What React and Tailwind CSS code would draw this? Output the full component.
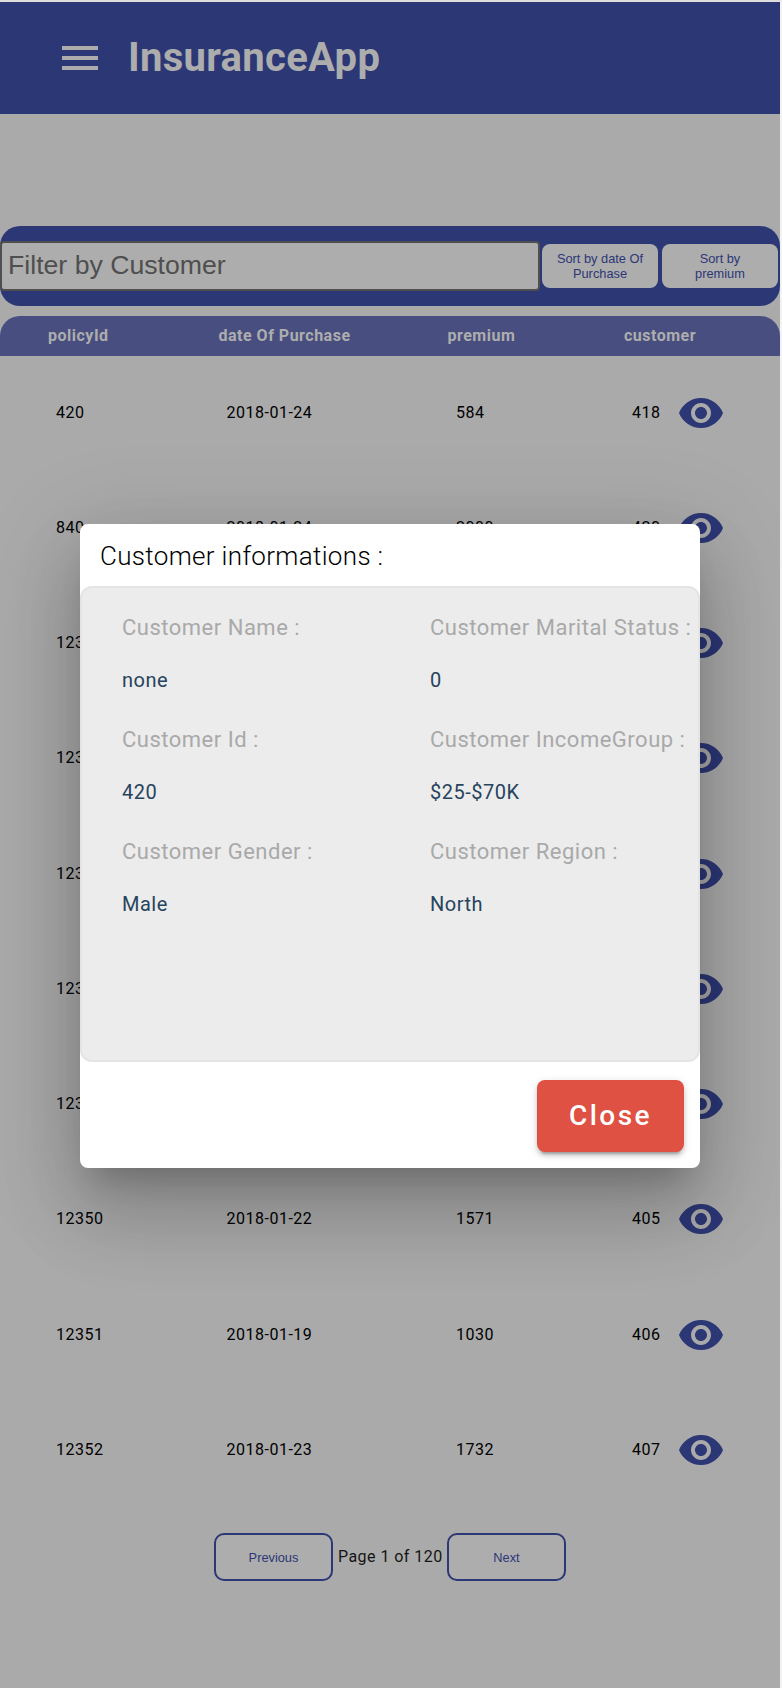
import React from "react";

const rows = [
  ["420", "2018-01-24", "584", "418"],
  ["840", "2018-01-24", "2000", "420"],
  ["12345", "2018-01-24", "1300", "400"],
  ["12346", "2018-01-24", "1420", "401"],
  ["12347", "2018-01-23", "1275", "402"],
  ["12348", "2018-01-23", "1116", "403"],
  ["12349", "2018-01-22", "1384", "404"],
  ["12350", "2018-01-22", "1571", "405"],
  ["12351", "2018-01-19", "1030", "406"],
  ["12352", "2018-01-23", "1732", "407"],
];

const details = [
  ["Customer Name :", "none"],
  ["Customer Marital Status :", "0"],
  ["Customer Id :", "420"],
  ["Customer IncomeGroup :", "$25-$70K"],
  ["Customer Gender :", "Male"],
  ["Customer Region :", "North"],
];

function MenuIcon() {
  return (
    <svg viewBox="0 0 24 24" className="size-12 fill-[#adadad]">
      <path d="M3 18h18v-2H3v2zm0-5h18v-2H3v2zm0-7v2h18V6H3z" />
    </svg>
  );
}

function EyeIcon() {
  return (
    <svg viewBox="0 0 24 24" className="size-12 shrink-0 fill-[#2c3776]">
      <path d="M12 4.5C7 4.5 2.73 7.61 1 12c1.73 4.39 6 7.5 11 7.5s9.27-3.11 11-7.5c-1.73-4.39-6-7.5-11-7.5zM12 17c-2.76 0-5-2.24-5-5s2.24-5 5-5 5 2.24 5 5-2.24 5-5 5zm0-8c-1.66 0-3 1.34-3 3s1.34 3 3 3 3-1.34 3-3-1.34-3-3-3z" />
    </svg>
  );
}

function Navbar() {
  return (
    <header className="flex h-28 items-center bg-[#2c3776] pl-14">
      <MenuIcon />
      <h1 className="ml-6 text-[40px] font-bold leading-none tracking-[0.3px] text-[#adadad]">
        InsuranceApp
      </h1>
    </header>
  );
}

function FilterBar() {
  return (
    <div className="mt-28 flex h-20 items-center rounded-[20px] bg-[#2c3776]">
      <input
        placeholder="Filter by Customer"
        className="h-[50px] w-[540px] rounded-[4px] border-2 border-[#4f4f4f] bg-[#adadad] px-1.5 pb-px font-['Liberation_Sans',sans-serif] text-[26.67px] placeholder:text-[#4f4f4f] placeholder:opacity-100"
      />
      <button className="ml-0.5 h-11 w-[116px] rounded-lg bg-[#adadad] px-3 font-['Liberation_Sans',sans-serif] text-[12.8px] leading-[15px] text-[#2c3776]">
        Sort by date Of Purchase
      </button>
      <button className="ml-1 h-11 w-[116px] rounded-lg bg-[#adadad] px-7 font-['Liberation_Sans',sans-serif] text-[12.8px] leading-[15px] text-[#2c3776]">
        Sort by premium
      </button>
    </div>
  );
}

function Table() {
  return (
    <section className="mt-2.5 text-base tracking-[0.5px]">
      <div className="grid h-10 grid-cols-[170.5px_229px_176.5px_1fr] items-center rounded-t-[20px] bg-[#484f80] pl-12 font-bold text-[#adadad]">
        <span>policyId</span>
        <span>date Of Purchase</span>
        <span>premium</span>
        <span>customer</span>
      </div>
      <div className="-mt-px">
        {rows.map(([id, date, premium, customer]) => (
          <div
            key={id}
            className="grid h-[115.25px] grid-cols-[170.5px_229.5px_176px_1fr] items-center pl-14 text-black"
          >
            <span>{id}</span>
            <span>{date}</span>
            <span>{premium}</span>
            <span className="flex items-center">
              <span className="w-[45px]">{customer}</span>
              <EyeIcon />
            </span>
          </div>
        ))}
      </div>
    </section>
  );
}

function Pager() {
  return (
    <nav className="mt-[25.5px] flex items-center justify-center text-base tracking-[0.45px] text-[#151515]">
      <button className="h-12 w-[119px] rounded-[10px] border-2 border-[#2c3776] bg-[#adadad] pt-0.5 font-['Liberation_Sans',sans-serif] text-[12.8px] tracking-normal text-[#2c3776]">
        Previous
      </button>
      <span className="w-[114px] whitespace-nowrap pl-[5px]">Page 1 of 120</span>
      <button className="h-12 w-[119px] rounded-[10px] border-2 border-[#2c3776] bg-[#adadad] pt-0.5 font-['Liberation_Sans',sans-serif] text-[12.8px] tracking-normal text-[#2c3776]">
        Next
      </button>
    </nav>
  );
}

function CustomerDialog() {
  return (
    <div
      role="dialog"
      className="absolute left-20 top-[524px] flex h-[644px] w-[620px] flex-col rounded-lg bg-white shadow-[0_22px_30px_-14px_rgba(0,0,0,0.2),0_48px_76px_6px_rgba(0,0,0,0.14),0_18px_92px_16px_rgba(0,0,0,0.12)]"
    >
      <h2 className="flex h-[62px] items-center pl-5 pt-0.5 text-[26px] font-light leading-8 tracking-[0.33px] text-black">
        Customer informations :
      </h2>
      <div className="grid h-[476px] grid-cols-[308px_1fr] content-start rounded-xl border-2 border-[#e4e4e4] bg-[#ececec] pl-10 pt-[13px]">
        {details.map(([label, value]) => (
          <div key={label} className="h-28 whitespace-nowrap pt-3">
            <div className="text-[22px] leading-[30px] tracking-[0.5px] text-[#a9a9a9]">{label}</div>
            <div className="mt-[23px] text-xl leading-[28px] tracking-[0.5px] text-[#27435e]">{value}</div>
          </div>
        ))}
      </div>
      <div className="flex justify-end pr-4 pt-[18px]">
        <button className="h-[72px] w-[147px] rounded-lg bg-[#df5142] text-[28px] font-medium tracking-[2.5px] text-white shadow-[0_6px_2px_-4px_rgba(0,0,0,0.2),0_4px_4px_rgba(0,0,0,0.14),0_2px_10px_rgba(0,0,0,0.12)]">
          Close
        </button>
      </div>
    </div>
  );
}

export default function App() {
  return (
    <div className="h-[1688px] overflow-hidden border-r-2 border-t-2 border-r-[#f3f3f3] border-t-[#dedede] bg-[#aaaaaa] font-[Roboto,sans-serif]">
      <div className="relative -mt-0.5 h-[1688px] overflow-hidden pt-0.5">
        <Navbar />
        <FilterBar />
        <Table />
        <Pager />
        <CustomerDialog />
      </div>
    </div>
  );
}
